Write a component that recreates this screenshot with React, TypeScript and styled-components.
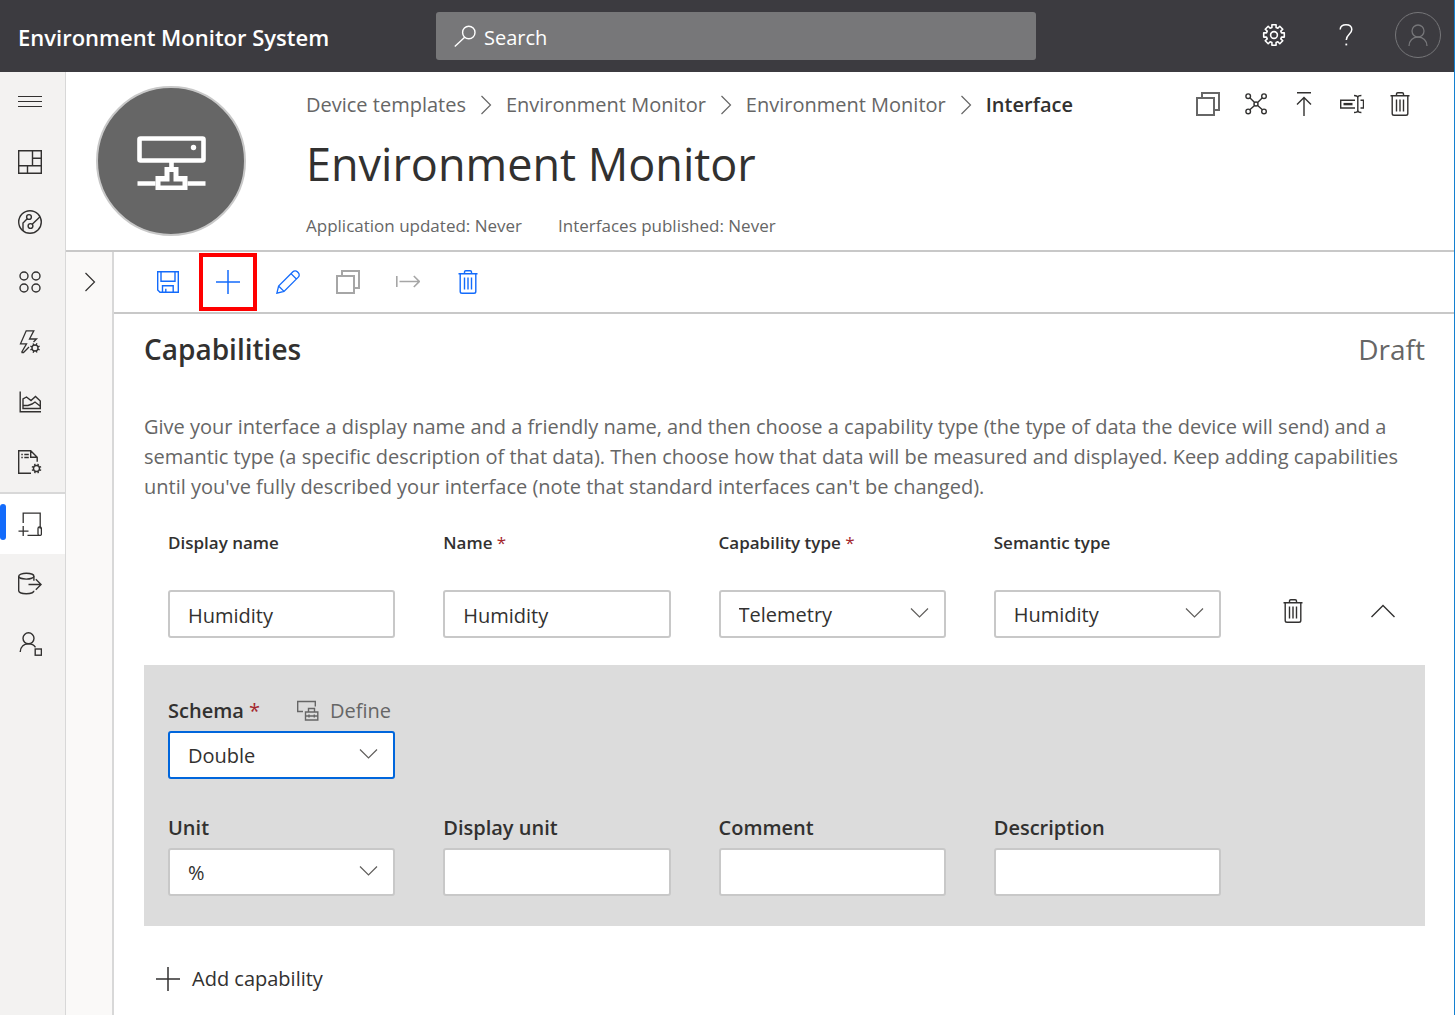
import React from 'react';
import styled, { createGlobalStyle, css } from 'styled-components';

const color = {
  bar: '#3c3b40',
  search: '#777779',
  rail: '#f3f2f1',
  drawer: '#faf9f8',
  line: '#c8c8c8',
  softLine: '#d8d8d8',
  text: '#323130',
  muted: '#666666',
  disabled: '#a6a6a6',
  blue: '#136bfb',
  focus: '#0066dc',
  panel: '#dcdcdc',
  required: '#a4262c',
};

const GlobalStyle = createGlobalStyle`
  *, *::before, *::after { box-sizing: border-box; }
  body {
    margin: 0;
    background: #fff;
    color: ${color.text};
    font-family: "Open Sans", "Noto Sans", sans-serif;
    font-size: 20px;
    line-height: 30px;
  }
  button, input, select { font: inherit; color: inherit; }
  h1, h2, p { margin: 0; }
`;

const Page = styled.div`
  display: flex;
  flex-direction: column;
  min-height: 100vh;
  border-right: 1px solid #1480d0;
`;

const TopBar = styled.header`
  display: flex;
  align-items: center;
  height: 72px;
  background: ${color.bar};
  color: #fff;
`;

const AppName = styled.a`
  flex: 0 0 436px;
  padding-left: 18px;
  padding-top: 2px;
  color: #fff;
  font-size: 22px;
  font-weight: 600;
  text-decoration: none;
  white-space: nowrap;
`;

const SearchBox = styled.label`
  display: flex;
  align-items: center;
  flex: 0 1 600px;
  gap: 6px;
  height: 48px;
  padding: 0 18px;
  border-radius: 3px;
  background: ${color.search};
`;

const SearchInput = styled.input`
  flex: 1;
  min-width: 0;
  padding: 4px 0 0;
  border: 0;
  outline: 0;
  background: transparent;
  &::placeholder { color: #fff; opacity: 1; }
`;

const TopActions = styled.div`
  display: flex;
  align-self: flex-start;
  margin-left: auto;
`;

const BareButton = styled.button`
  display: flex;
  align-items: center;
  justify-content: center;
  padding: 0;
  border: 0;
  background: transparent;
  cursor: pointer;
`;

const TopButton = styled(BareButton)`
  width: 72px;
  height: 70px;
`;

const Avatar = styled.span`
  display: flex;
  align-items: center;
  justify-content: center;
  width: 46px;
  height: 46px;
  border: 1px solid #767679;
  border-radius: 50%;
  color: #767679;
`;

const Body = styled.div`
  display: flex;
  flex: 1;
`;

const Rail = styled.nav`
  flex: 0 0 66px;
  border-right: 1px solid ${color.softLine};
  background: ${color.rail};
`;

const RailItem = styled.a<{ $active?: boolean }>`
  display: flex;
  align-items: center;
  height: 60px;
  padding-left: 18px;
  color: ${color.text};
  ${p => p.$active && css`
    position: relative;
    height: 62px;
    border-top: 2px solid ${color.softLine};
    background: #fff;
    &::before {
      content: "";
      position: absolute;
      left: 0;
      top: 10px;
      width: 6px;
      height: 36px;
      border-radius: 3px;
      background: ${color.blue};
    }
  `}
`;

const RailToggle = styled(BareButton)`
  justify-content: flex-start;
  width: 100%;
  height: 60px;
  padding-left: 18px;
`;

const Main = styled.main`
  display: flex;
  flex-direction: column;
  flex: 1;
  min-width: 0;
`;

const PageHead = styled.section`
  display: flex;
  gap: 60px;
  padding: 14px 30px 12px;
  border-bottom: 2px solid ${color.line};
`;

const TemplateBadge = styled.div`
  display: flex;
  align-items: center;
  justify-content: center;
  flex: none;
  width: 150px;
  height: 150px;
  border: 2px solid ${color.line};
  border-radius: 50%;
  background: ${color.muted};
  color: #fff;
`;

const HeadText = styled.div`
  flex: 1;
  min-width: 0;
`;

const HeadTop = styled.div`
  display: flex;
  align-items: center;
  justify-content: space-between;
  height: 36px;
`;

const Crumbs = styled.nav`
  display: flex;
  align-items: center;
  gap: 8px;
  padding-top: 2px;
  color: ${color.muted};
  white-space: nowrap;
`;

const Crumb = styled.a`
  color: inherit;
  text-decoration: none;
`;

const CurrentCrumb = styled.span`
  color: ${color.text};
  font-weight: 600;
`;

const HeadActions = styled.div`
  display: flex;
`;

const HeadButton = styled(BareButton)<{ $muted?: boolean }>`
  width: 48px;
  height: 36px;
  color: ${p => (p.$muted ? color.muted : color.text)};
`;

const Title = styled.h1`
  margin-top: 10px;
  font-size: 45px;
  font-weight: 400;
  line-height: 64px;
`;

const Meta = styled.div`
  display: flex;
  gap: 36px;
  margin-top: 18px;
  color: ${color.muted};
  font-size: 17px;
  line-height: 24px;
`;

const Work = styled.div`
  display: flex;
  flex: 1;
`;

const Drawer = styled.aside`
  flex: 0 0 48px;
  border-right: 2px solid ${color.softLine};
  background: ${color.drawer};
`;

const DrawerToggle = styled(BareButton)`
  width: 100%;
  height: 60px;
  padding-left: 2px;
`;

const Editor = styled.div`
  flex: 1;
  min-width: 0;
`;

const Toolbar = styled.div`
  display: flex;
  padding-left: 24px;
  border-bottom: 2px solid ${color.line};
`;

const Tool = styled(BareButton)<{ $marked?: boolean }>`
  width: 60px;
  height: 60px;
  color: ${color.blue};
  &:disabled { color: ${color.disabled}; cursor: default; }
  ${p => p.$marked && css`
    outline: 4px solid #ff0000;
    outline-offset: -5px;
  `}
`;

const Content = styled.div`
  padding: 14px 29px 20px 30px;
`;

const ContentHead = styled.div`
  display: flex;
  align-items: center;
  justify-content: space-between;
  height: 42px;
`;

const Heading = styled.h2`
  font-size: 28px;
  font-weight: 600;
  line-height: 42px;
`;

const Status = styled.span`
  color: ${color.muted};
  font-size: 28px;
  line-height: 42px;
`;

const Intro = styled.p`
  margin-top: 42px;
  color: ${color.muted};
`;

const FieldGrid = styled.div`
  display: grid;
  grid-template-columns: repeat(4, minmax(0, 1fr)) 156px;
  column-gap: 48px;
  align-items: end;
  padding-left: 24px;
`;

const CapabilityRow = styled(FieldGrid)`
  margin-top: 26px;
`;

const Details = styled.section`
  display: flex;
  flex-direction: column;
  gap: 34px;
  margin-top: 27px;
  padding: 31px 0 30px;
  background: ${color.panel};
`;

const Field = styled.div<{ $gap: number }>`
  display: flex;
  flex-direction: column;
  gap: ${p => p.$gap}px;
  min-width: 0;
`;

const LabelRow = styled.div`
  display: flex;
  align-items: center;
  gap: 36px;
`;

const Label = styled.label<{ $small?: boolean }>`
  font-size: ${p => (p.$small ? 17 : 20)}px;
  font-weight: 600;
  line-height: 30px;
  white-space: nowrap;
`;

const Star = styled.span`
  color: ${color.required};
  font-weight: 400;
`;

const control = css`
  width: 100%;
  height: 48px;
  border: 2px solid ${color.line};
  border-radius: 3px;
  background: #fff;
  &:focus { outline: 0; border-color: ${color.focus}; }
`;

const TextBox = styled.input`
  ${control}
  padding: 2px 18px 0;
`;

const SelectWrap = styled.div`
  position: relative;
  svg {
    position: absolute;
    right: 16px;
    top: 17px;
    pointer-events: none;
  }
`;

const SelectBox = styled.select<{ $focused?: boolean }>`
  ${control}
  appearance: none;
  padding: 2px 42px 0 18px;
  ${p => p.$focused && css`border-color: ${color.focus};`}
`;

const RowActions = styled.div`
  display: flex;
  justify-content: space-between;
  padding: 0 18px 3px 0;
`;

const RowButton = styled(BareButton)`
  width: 48px;
  height: 48px;
`;

const DefineButton = styled(BareButton)`
  gap: 10px;
  color: ${color.muted};
`;

const AddButton = styled(BareButton)`
  gap: 12px;
  margin-top: 38px;
  padding-left: 12px;
`;

type IconProps = { w?: number; children: React.ReactNode };

const Icon = ({ w = 1.4, children }: IconProps) => (
  <svg width="24" height="24" viewBox="0 0 24 24" fill="none" stroke="currentColor" strokeWidth={w} aria-hidden="true">
    {children}
  </svg>
);

const gear = (cx: number, cy: number, inner: number, outer: number, hole: number) => {
  const teeth = 8;
  const points: string[] = [];
  for (let i = 0; i < teeth; i++) {
    const base = (i * 2 * Math.PI) / teeth;
    [[-0.27, inner], [-0.2, outer], [0.2, outer], [0.27, inner]].forEach(([a, r]) => {
      points.push(`${(cx + r * Math.sin(base + a)).toFixed(2)} ${(cy + r * Math.cos(base + a)).toFixed(2)}`);
    });
  }
  return (
    <>
      <path d={`M${points.join('L')}Z`} strokeLinejoin="round" />
      <circle cx={cx} cy={cy} r={hole} />
    </>
  );
};

const MiniGear = ({ cx, cy }: { cx: number; cy: number }) => (
  <>
    <circle cx={cx} cy={cy} r="3" />
    {[0, 45, 90, 135, 180, 225, 270, 315].map(a => (
      <path key={a} d={`M${cx} ${cy - 3}v-2`} transform={`rotate(${a + 22} ${cx} ${cy})`} />
    ))}
  </>
);

const MenuIcon = () => <Icon w={1}><path d="M0 6.5h24M0 11.5h24M0 16.5h24" /></Icon>;
const DashboardIcon = () => <Icon><path d="M.7 .7h22.6v22.6H.7zM14.5 .7v15M.7 15.7h22.6M14.5 8.2h8.8M9.5 15.7v7.6" /></Icon>;
const DevicesIcon = () => (
  <Icon>
    <circle cx="12" cy="12" r="11.3" />
    <circle cx="11" cy="7" r="2.4" />
    <circle cx="12.5" cy="16" r="2.4" />
    <path d="M9.2 8.8 5 13v8M14.2 14.2 21.8 7" />
  </Icon>
);
const GroupsIcon = () => (
  <Icon>
    <circle cx="6" cy="6" r="4" /><circle cx="18" cy="6" r="4" />
    <circle cx="6" cy="18" r="4" /><circle cx="18" cy="18" r="4" />
  </Icon>
);
const RulesIcon = () => (
  <Icon w={1.3}>
    <path d="M3.5 22.5 8.5 13.8H2.5L8.2.8h7.6L11.5 9h7l-3 3M3.5 22.5H5.5L11 17" />
    <MiniGear cx={17} cy={18} />
  </Icon>
);
const AnalyticsIcon = () => (
  <Icon>
    <path d="M2.2 1.5v20.3H23M5 18.5V9l3.5-2L13 10.5l4.5-4L22.3 11v7.5zM5 15.5l5 0 4-1.5 3-2 5 4" />
  </Icon>
);
const JobsIcon = () => (
  <Icon>
    <path d="M13 23.3H.7V.7h12l6.5 6.5v4.5M12.7 .7v6.5h6.5M3.3 4.5h1.5M6.3 4.5h4.5M3.3 7.5h1.5M6.3 7.5h4.5" />
    <MiniGear cx={18.5} cy={18.5} />
  </Icon>
);
const TemplatesIcon = () => (
  <Icon w={1.3}>
    <path d="M5.2 11V1.2h17v15.5M5.2 14v10M.5 19.2h10M9.5 23.3h11.8" />
    <rect x="20" y="15" width="3.4" height="8.4" rx="1.5" />
  </Icon>
);
const ExportIcon = () => (
  <Icon>
    <ellipse cx="8.3" cy="4.2" rx="7.6" ry="2.9" />
    <path d="M.7 4.2v14.6c0 1.6 3.4 2.9 7.6 2.9s7.6-1.3 7.6-2.9M15.9 4.2v4.5M10.5 12.5h12.5M17.8 7.2l5.3 5.3-5.3 5.3" />
  </Icon>
);
const AdminIcon = () => (
  <Icon>
    <circle cx="10.5" cy="6.3" r="5.5" />
    <path d="M2.2 20c.3-5.5 4-8.2 8.3-8.2 3.3 0 5.5 1.2 7 3.5" />
    <rect x="17.2" y="17" width="6.2" height="6.2" />
  </Icon>
);
const SearchIcon = () => <Icon><circle cx="14.8" cy="8.5" r="6.2" /><path d="M10.7 13.2.8 22.5" /></Icon>;
const SettingsIcon = () => <Icon w={1.6}>{gear(12, 12, 7.8, 10.5, 3.4)}</Icon>;
const HelpIcon = () => (
  <Icon w={1.5}>
    <path d="M6.2 6.5C6.2 3.2 8.8 1.7 12 1.7c3.3 0 5.8 1.8 5.8 4.9 0 4.6-5.5 5-5.5 10.4" />
    <path d="M11.4 21.5h1.8" strokeWidth="1.8" />
  </Icon>
);
const PersonIcon = () => <Icon w={1.3}><circle cx="12" cy="8" r="6" /><path d="M3 23c0-5.5 4-9 9-9s9 3.5 9 9" /></Icon>;
const CopyIcon = () => <Icon w={2}><path d="M1 6h17v17H1zM6 6V1h17v17h-5" /></Icon>;
const NetworkIcon = () => (
  <Icon>
    <circle cx="4.2" cy="4.2" r="2.3" /><circle cx="20" cy="4.2" r="2.3" />
    <circle cx="4.2" cy="19.4" r="2.3" /><circle cx="20" cy="19.4" r="2.3" />
    <circle cx="12" cy="12" r="2" />
    <path d="m5.8 5.8 4.8 4.8M18.4 5.8l-4.8 4.8M5.8 17.8l4.8-4.4M18.4 17.8l-4.8-4.4" />
  </Icon>
);
const PublishIcon = () => <Icon><path d="M5 .7h14M12 24V6M5 12.5l7-7 7 7" /></Icon>;
const RenameIcon = () => (
  <Icon>
    <path d="M15 16H.7V8.2H15M20.5 8.2h3V16h-3M17.8 5v14M14 3.5c2 0 3.8.3 3.8 2.2 0-1.9 1.6-2.2 3.6-2.2M14 20.500c2 0 3.800-.3 3.800-2.200 0 1.900 1.600 2.200 3.600 2.200" />
    <path d="M3.5 12.1h9" strokeWidth="2.4" />
  </Icon>
);
const TrashIcon = () => (
  <Icon>
    <path d="M2.5 3.7h19M4.2 3.7v17.8c0 1 .7 1.8 1.8 1.8h12c1 0 1.8-.8 1.8-1.8V3.7M8.5 3.7V2c0-.8.5-1.3 1.3-1.3h4.4c.8 0 1.3.5 1.3 1.3v1.7M8.5 7.5v12M12 7.5v12M15.5 7.5v12" />
  </Icon>
);
const SaveIcon = () => <Icon><path d="M1.7 1.7h20.6v20.6H4L1.7 20zM5 1.7v9.6h14V1.7M6.5 22.3v-6.5h10.7v6.5M9.8 22.3v-3.5" /></Icon>;
const PlusIcon = () => <Icon w={1.5}><path d="M0 12h24M12 0v24" /></Icon>;
const EditIcon = () => (
  <Icon w={1.3}>
    <path d="M.9 23.2 2.6 16 16.9 1.7c1.2-1.2 3.2-1.2 4.4 0l1 1c1.2 1.2 1.2 3.2 0 4.400L8 21.400zM15 3.600l5.400 5.400M2.600 16l5.400 5.400" />
  </Icon>
);
const InheritIcon = () => <Icon w={1.6}><path d="M.8 6v11M3.5 11.5h19.7M17.8 6l5.5 5.5-5.5 5.5" /></Icon>;
const DefineIcon = () => (
  <Icon>
    <path d="M7 12.5H1.7V2.5h17.600v5M12.500 13V9.500h6V13M9.500 13h12.300v8H9.500zM9.500 17h12.300M13 15.500v3M18.300 15.500v3" />
  </Icon>
);
const ChevronRight = () => <Icon w={1.2}><path d="m7.5 3 9 9-9 9" /></Icon>;
const ChevronUp = () => <Icon><path d="m.5 18 11.500-11.500L23.500 18" /></Icon>;
const ChevronDown = () => (
  <svg width="20" height="12" viewBox="0 0 20 12" fill="none" stroke="#605e5c" strokeWidth="1.2" aria-hidden="true">
    <path d="m1 1.500 8.500 8.500L18 1.500" />
  </svg>
);
const DeviceIcon = () => (
  <svg width="70" height="58" viewBox="-1 -4 70 58" fill="none" stroke="currentColor" strokeWidth="4.6" aria-hidden="true">
    <rect x="2.5" y="2.5" width="64" height="22" rx="1" />
    <circle cx="56.5" cy="11.5" r="2.7" fill="currentColor" stroke="none" />
    <path d="M34.5 25v7M.5 47.5h18M50.5 47.5h18" />
    <path fill="currentColor" stroke="none" fillRule="evenodd" d="M27.5 31h14v9h9v14h-32V40h9zM32.5 36v9.500h-9v4h22v-4h-9V36z" />
  </svg>
);

const railLinks = [
  { name: 'Dashboard', icon: <DashboardIcon /> },
  { name: 'Devices', icon: <DevicesIcon /> },
  { name: 'Device groups', icon: <GroupsIcon /> },
  { name: 'Rules', icon: <RulesIcon /> },
  { name: 'Analytics', icon: <AnalyticsIcon /> },
  { name: 'Jobs', icon: <JobsIcon /> },
  { name: 'Device templates', icon: <TemplatesIcon />, active: true },
  { name: 'Data export', icon: <ExportIcon /> },
  { name: 'Administration', icon: <AdminIcon /> },
];

type FieldProps = {
  id: string;
  label: string;
  value?: string;
  select?: boolean;
  required?: boolean;
  small?: boolean;
  focused?: boolean;
  aside?: React.ReactNode;
};

const FormField = ({ id, label, value = '', select, required, small, focused, aside }: FieldProps) => (
  <Field $gap={small ? 32 : 5}>
    <LabelRow>
      <Label htmlFor={id} $small={small}>
        {label}{required && <Star> *</Star>}
      </Label>
      {aside}
    </LabelRow>
    {select ? (
      <SelectWrap>
        <SelectBox id={id} defaultValue={value} $focused={focused}>
          <option>{value}</option>
        </SelectBox>
        <ChevronDown />
      </SelectWrap>
    ) : (
      <TextBox id={id} defaultValue={value} />
    )}
  </Field>
);

export default function App() {
  return (
    <>
      <GlobalStyle />
      <Page>
        <TopBar>
          <AppName href="#">Environment Monitor System</AppName>
          <SearchBox>
            <SearchIcon />
            <SearchInput type="text" placeholder="Search" aria-label="Search" />
          </SearchBox>
          <TopActions>
            <TopButton aria-label="Settings"><SettingsIcon /></TopButton>
            <TopButton aria-label="Help"><HelpIcon /></TopButton>
            <TopButton aria-label="Account"><Avatar><PersonIcon /></Avatar></TopButton>
          </TopActions>
        </TopBar>
        <Body>
          <Rail aria-label="Main">
            <RailToggle aria-label="Expand menu"><MenuIcon /></RailToggle>
            {railLinks.map(link => (
              <RailItem key={link.name} href="#" aria-label={link.name} $active={link.active}>{link.icon}</RailItem>
            ))}
          </Rail>
          <Main>
            <PageHead>
              <TemplateBadge><DeviceIcon /></TemplateBadge>
              <HeadText>
                <HeadTop>
                  <Crumbs aria-label="Breadcrumb">
                    <Crumb href="#">Device templates</Crumb>
                    <ChevronRight />
                    <Crumb href="#">Environment Monitor</Crumb>
                    <ChevronRight />
                    <Crumb href="#">Environment Monitor</Crumb>
                    <ChevronRight />
                    <CurrentCrumb>Interface</CurrentCrumb>
                  </Crumbs>
                  <HeadActions>
                    <HeadButton aria-label="Copy" $muted><CopyIcon /></HeadButton>
                    <HeadButton aria-label="Manage relationships"><NetworkIcon /></HeadButton>
                    <HeadButton aria-label="Publish"><PublishIcon /></HeadButton>
                    <HeadButton aria-label="Rename"><RenameIcon /></HeadButton>
                    <HeadButton aria-label="Delete"><TrashIcon /></HeadButton>
                  </HeadActions>
                </HeadTop>
                <Title>Environment Monitor</Title>
                <Meta>
                  <span>Application updated: Never</span>
                  <span>Interfaces published: Never</span>
                </Meta>
              </HeadText>
            </PageHead>
            <Work>
              <Drawer>
                <DrawerToggle aria-label="Show template tree"><ChevronRight /></DrawerToggle>
              </Drawer>
              <Editor>
                <Toolbar role="toolbar">
                  <Tool aria-label="Save"><SaveIcon /></Tool>
                  <Tool aria-label="Add" $marked><PlusIcon /></Tool>
                  <Tool aria-label="Edit"><EditIcon /></Tool>
                  <Tool aria-label="Copy" disabled><CopyIcon /></Tool>
                  <Tool aria-label="Extend" disabled><InheritIcon /></Tool>
                  <Tool aria-label="Delete"><TrashIcon /></Tool>
                </Toolbar>
                <Content>
                  <ContentHead>
                    <Heading>Capabilities</Heading>
                    <Status>Draft</Status>
                  </ContentHead>
                  <Intro>
                    Give your interface a display name and a friendly name, and then choose a capability type (the type of
                    data the device will send) and a semantic type (a specific description of that data). Then choose how
                    that data will be measured and displayed. Keep adding capabilities until you've fully described your
                    interface (note that standard interfaces can't be changed).
                  </Intro>
                  <CapabilityRow>
                    <FormField id="display-name" label="Display name" value="Humidity" small />
                    <FormField id="name" label="Name" value="Humidity" required small />
                    <FormField id="capability-type" label="Capability type" value="Telemetry" select required small />
                    <FormField id="semantic-type" label="Semantic type" value="Humidity" select small />
                    <RowActions>
                      <RowButton aria-label="Delete capability"><TrashIcon /></RowButton>
                      <RowButton aria-label="Collapse"><ChevronUp /></RowButton>
                    </RowActions>
                  </CapabilityRow>
                  <Details>
                    <FieldGrid>
                      <FormField
                        id="schema"
                        label="Schema"
                        value="Double"
                        select
                        required
                        focused
                        aside={<DefineButton><DefineIcon />Define</DefineButton>}
                      />
                    </FieldGrid>
                    <FieldGrid>
                      <FormField id="unit" label="Unit" value="%" select />
                      <FormField id="display-unit" label="Display unit" />
                      <FormField id="comment" label="Comment" />
                      <FormField id="description" label="Description" />
                    </FieldGrid>
                  </Details>
                  <AddButton><PlusIcon />Add capability</AddButton>
                </Content>
              </Editor>
            </Work>
          </Main>
        </Body>
      </Page>
    </>
  );
}
